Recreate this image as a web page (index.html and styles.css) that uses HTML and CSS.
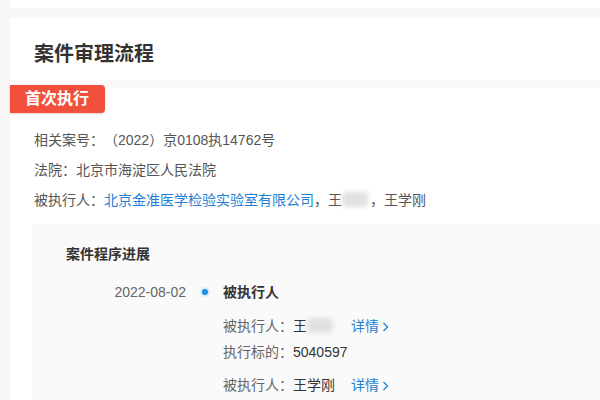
FILE: index.html
```html
<!DOCTYPE html>
<html lang="zh-CN">
<head>
  <meta charset="UTF-8">
  <meta name="viewport" content="width=device-width, initial-scale=1.0">
  <title>案件审理流程</title>
  <link rel="stylesheet" href="styles.css">
</head>
<body>

  <div class="page">
    <div class="top-card"></div>

    <div class="main-card">
      <div class="card-header">
        <h2 class="card-title">案件审理流程</h2>
      </div>

      <div class="stage-tag">首次执行</div>

      <div class="case-info">
        <p>相关案号：（2022）京0108执14762号</p>
        <p>法院：北京市海淀区人民法院</p>
        <p>被执行人：<a class="link" href="#">北京金准医学检验实验室有限公司</a>，王<span class="masked"></span>，王学刚</p>
      </div>

      <div class="progress-panel">
        <h3 class="panel-title">案件程序进展</h3>

        <div class="timeline-row">
          <span class="tl-date">2022-08-02</span>
          <span class="tl-dot"></span>
          <div class="tl-body">
            <p class="tl-title">被执行人</p>

            <div class="tl-group">
              <p><span class="label">被执行人：</span><span class="value">王<span class="masked"></span></span><a class="detail" href="#">详情<svg width="7" height="10" viewBox="0 0 7 10"><polyline points="1.5,1 5.5,5 1.5,9" fill="none" stroke="currentColor" stroke-width="1.3"/></svg></a></p>
              <p><span class="label">执行标的：</span><span class="value">5040597</span></p>
            </div>

            <div class="tl-group">
              <p><span class="label">被执行人：</span><span class="value">王学刚</span><a class="detail" href="#">详情<svg width="7" height="10" viewBox="0 0 7 10"><polyline points="1.5,1 5.5,5 1.5,9" fill="none" stroke="currentColor" stroke-width="1.3"/></svg></a></p>
            </div>
          </div>
        </div>
      </div>
    </div>
  </div>

</body>
</html>
```

FILE: styles.css
```css
*{
  margin: 0;
  padding: 0;
  box-sizing: border-box;
}

body{
  font-family: "Liberation Sans", "Noto Sans CJK SC", sans-serif;
  background-color: #f6f6f6;
  color: #333;
  text-spacing-trim: space-all;
}

.page{
  height: 100vh;
  overflow: hidden;
  padding-left: 10px;
}

.top-card{
  height: 8px;
  background-color: #fff;
  margin-bottom: 8px;
}

.main-card{
  background-color: #fff;
  height: calc(100vh - 16px);
  box-shadow: inset 0 3px 3px -2px rgba(0, 0, 0, 0.05);
}

.card-header{
  padding: 24px 24px 12px;
  border-bottom: 8px solid #fafafa;
}

.card-title{
  font-size: 20px;
  line-height: 28px;
  font-weight: 700;
  color: #333;
}

.stage-tag{
  display: inline-block;
  margin-top: -3px;
  width: 95px;
  height: 28px;
  line-height: 28px;
  padding-left: 15px;
  background-color: #f24f3c;
  color: #fff;
  font-size: 16px;
  font-weight: 700;
  border-radius: 0 4px 4px 0;
  box-shadow: 0 1px 2px rgba(200, 60, 40, 0.25);
  vertical-align: top;
}

.case-info{
  margin-top: 12px;
  padding-left: 24px;
  font-size: 14px;
  line-height: 30px;
  color: #555;
}

.link{
  color: #1f7fd6;
  text-decoration: none;
}

.masked{
  display: inline-block;
  width: 26px;
  height: 15px;
  margin-right: 2px;
  vertical-align: -2px;
  background-color: #e0e0e0;
  border-radius: 4px;
  filter: blur(2.5px);
}

.progress-panel{
  margin-top: 9px;
  margin-left: 22px;
  padding: 20px 0 0 34px;
  background-color: #fafafa;
  height: 100%;
}

.panel-title{
  font-size: 14px;
  line-height: 20px;
  font-weight: 700;
  color: #333;
}

.timeline-row{
  display: grid;
  grid-template-columns: 120px 37px 1fr;
  margin-top: 16px;
  font-size: 14px;
}

.tl-date{
  text-align: right;
  line-height: 24px;
  color: #666;
}

.tl-dot{
  width: 6px;
  height: 6px;
  border-radius: 50%;
  background-color: #1a8fe6;
  margin: 9px 0 0 16px;
  box-shadow: 0 0 0 2px rgba(26, 143, 230, 0.12);
}

.tl-title{
  line-height: 24px;
  font-weight: 700;
  color: #333;
}

.tl-group{
  margin-top: 9px;
}

.tl-group + .tl-group{
  margin-top: 7px;
}

.tl-group p{
  line-height: 26px;
}

.label{
  color: #666;
}

.value{
  color: #333;
}

.detail{
  margin-left: 16px;
  color: #1f7fd6;
  text-decoration: none;
}

.detail svg{
  margin-left: 3px;
  vertical-align: -1px;
}
```
